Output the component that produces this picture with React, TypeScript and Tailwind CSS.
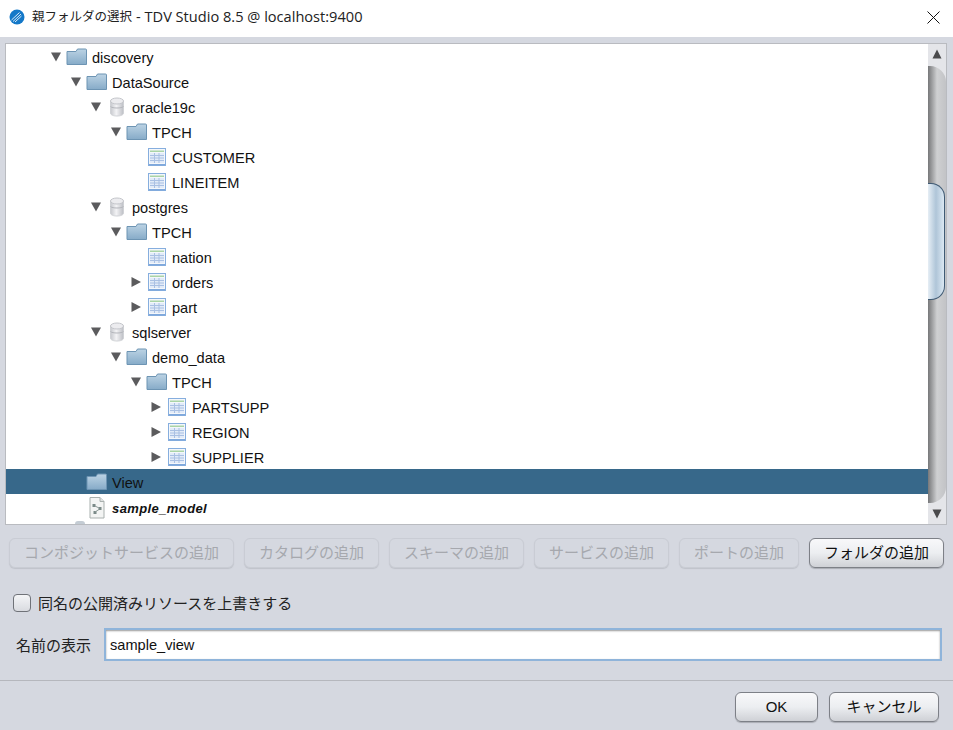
import React from "react";

const jp = "font-['Liberation_Sans','Noto_Sans_CJK_JP',sans-serif]";

function FolderIcon() {
  return (
    <svg width="22" height="18" viewBox="0 0 22 18" className="shrink-0">
      <defs>
        <linearGradient id="fg" x1="0" y1="0" x2="0" y2="1">
          <stop offset="0" stopColor="#bcd3e4" />
          <stop offset="1" stopColor="#86abc8" />
        </linearGradient>
      </defs>
      <path d="M1 3.5 H10 L11.5 1 H19.5 Q20.5 1 20.5 2 V16.5 H1 Z" fill="url(#fg)" stroke="#6d94b3" strokeWidth="1" />
    </svg>
  );
}

function DbIcon() {
  return (
    <svg width="16" height="20" viewBox="0 0 16 20" className="shrink-0">
      <defs>
        <linearGradient id="dg" x1="0" y1="0" x2="1" y2="0">
          <stop offset="0" stopColor="#c6c8cd" />
          <stop offset="0.45" stopColor="#f3f3f5" />
          <stop offset="1" stopColor="#bcbec4" />
        </linearGradient>
      </defs>
      <path d="M1.5 4 V16 C1.5 18 4.5 19 8 19 C11.5 19 14.5 18 14.5 16 V4 Z" fill="url(#dg)" stroke="#d0d2d6" />
      <ellipse cx="8" cy="4" rx="6.5" ry="3" fill="#ececef" stroke="#c4c6cb" />
      <path d="M1.5 9.5 C3 11.5 13 11.5 14.5 9.5" fill="none" stroke="#b4b6bc" />
    </svg>
  );
}

function TableIcon() {
  return (
    <svg width="18" height="18" viewBox="0 0 18 18" className="shrink-0">
      <rect x="0.5" y="0.5" width="17" height="17" fill="#f4f7fb" stroke="#86aede" />
      <rect x="2" y="2.5" width="14" height="1.5" fill="#a9d4a6" />
      <path d="M2 5 H16 V15 H2 Z" fill="#e2ebf8" />
      <path d="M2 7.5 H16 M2 10 H16 M2 12.5 H16 M6.5 5 V15 M11 5 V15" stroke="#a9c0e3" strokeWidth="1" fill="none" />
      <rect x="1" y="16" width="16" height="1.5" fill="#7fa8dc" />
    </svg>
  );
}

function ModelIcon() {
  return (
    <svg width="16" height="22" viewBox="0 0 16 22" className="shrink-0">
      <path d="M1 0.5 H11 L15 4.5 V21 H1 Z" fill="#f3f4f3" stroke="#a9b0ae" />
      <path d="M11 0.5 V4.5 H15" fill="#dfe2e2" stroke="#a9b0ae" />
      <rect x="3.5" y="7" width="3" height="3" fill="#7b8a88" />
      <rect x="9.5" y="10" width="3" height="3" fill="#7b8a88" />
      <rect x="4.5" y="14" width="3" height="3" fill="#7b8a88" />
      <path d="M6 9 L10 11 M6 15 L10 12.5" stroke="#8e9b99" fill="none" />
    </svg>
  );
}

type Arrow = "down" | "right" | "none";
type Kind = "folder" | "db" | "table";
type Row = { d: number; a: Arrow; k: Kind; t: string; sel?: boolean };

const rows: Row[] = [
  { d: 0, a: "down", k: "folder", t: "discovery" },
  { d: 1, a: "down", k: "folder", t: "DataSource" },
  { d: 2, a: "down", k: "db", t: "oracle19c" },
  { d: 3, a: "down", k: "folder", t: "TPCH" },
  { d: 4, a: "none", k: "table", t: "CUSTOMER" },
  { d: 4, a: "none", k: "table", t: "LINEITEM" },
  { d: 2, a: "down", k: "db", t: "postgres" },
  { d: 3, a: "down", k: "folder", t: "TPCH" },
  { d: 4, a: "none", k: "table", t: "nation" },
  { d: 4, a: "right", k: "table", t: "orders" },
  { d: 4, a: "right", k: "table", t: "part" },
  { d: 2, a: "down", k: "db", t: "sqlserver" },
  { d: 3, a: "down", k: "folder", t: "demo_data" },
  { d: 4, a: "down", k: "folder", t: "TPCH" },
  { d: 5, a: "right", k: "table", t: "PARTSUPP" },
  { d: 5, a: "right", k: "table", t: "REGION" },
  { d: 5, a: "right", k: "table", t: "SUPPLIER" },
  { d: 1, a: "none", k: "folder", t: "View", sel: true },
];

const pads: Record<number, string> = {
  0: "pl-[44px]",
  1: "pl-[64px]",
  2: "pl-[84px]",
  3: "pl-[104px]",
  4: "pl-[124px]",
  5: "pl-[144px]",
};

function ArrowMark({ a }: { a: Arrow }) {
  return (
    <span className="flex w-[16px] shrink-0 items-center">
      {a !== "none" && (
        <svg width="12" height="12" viewBox="0 0 12 12" className="shrink-0">
          {a === "down" ? <path d="M1 1.5 H11 L6 10.5 Z" fill="#5b5b5d" /> : <path d="M1.5 1 L11 6 L1.5 11 Z" fill="#5b5b5d" />}
        </svg>
      )}
    </span>
  );
}

function TreeRow({ r }: { r: Row }) {
  return (
    <div className={`flex h-[25px] items-center ${pads[r.d]} ${r.sel ? "bg-[#37688a]" : ""}`}>
      <ArrowMark a={r.a} />
      <span className="flex w-[22px] shrink-0 justify-center">
        {r.k === "folder" ? <FolderIcon /> : r.k === "db" ? <DbIcon /> : <TableIcon />}
      </span>
      <span className="ml-[4px] pt-[4px] text-[14.6px] leading-none text-[#111]">{r.t}</span>
    </div>
  );
}

function JButton({ w, label, disabled }: { w: string; label: string; disabled?: boolean }) {
  return (
    <button
      className={`${w} h-[30px] shrink-0 rounded-[6px] text-[15px] ${jp} ${
        disabled
          ? "border border-[#c9ccd4] bg-[#d5d8e0] text-[#a6a8ae] shadow-[0_1px_1px_#bfc2ca]"
          : "border border-[#7d8087] bg-gradient-to-b from-[#f8f8fa] via-[#eceef1] to-[#cfd1d6] text-[#111] shadow-[0_1px_1px_#a9acb3]"
      }`}
    >
      {label}
    </button>
  );
}

export default function App() {
  return (
    <div className={`flex h-[730px] w-[953px] flex-col overflow-hidden bg-[#d5d8e0] ${jp}`}>
      {/* title bar */}
      <div className="flex h-[37px] shrink-0 items-center bg-white pb-[3px] pl-[9px] pr-[13px]">
        <svg width="16" height="16" viewBox="0 0 16 16" className="shrink-0">
          <circle cx="8" cy="8" r="7.5" fill="#1478c8" />
          <path d="M2.5 11 L10.5 3.5 M4 12.5 L12 5 M6 13 L12.5 7" stroke="#dcecf8" strokeWidth="1" fill="none" />
        </svg>
        <span className="ml-[7px] font-['Open_Sans','Noto_Sans_CJK_JP',sans-serif] text-[12.5px] text-[#222]">親フォルダの選択</span>
        <span className="ml-[4px] font-['Open_Sans','Noto_Sans_CJK_JP',sans-serif] text-[14.6px] text-[#222]">- TDV Studio 8.5 @ localhost:9400</span>
        <svg width="13" height="13" viewBox="0 0 13 13" className="ml-auto">
          <path d="M0.5 0.5 L12.5 12.5 M12.5 0.5 L0.5 12.5" stroke="#111" strokeWidth="1" />
        </svg>
      </div>

      {/* tree */}
      <div className="ml-[5px] mt-[6px] flex h-[482px] w-[942px] shrink-0 border border-[#b9bbc0] bg-white">
        <div className="min-w-0 flex-1 overflow-hidden">
          {rows.map((r, i) => (
            <TreeRow key={i} r={r} />
          ))}
          <div className="flex h-[27px] items-center pl-[83px]">
            <ModelIcon />
            <span className="ml-[7px] pt-[2px] text-[13px] font-bold italic tracking-[0.4px] text-[#111]">sample_model</span>
          </div>
          <div className="ml-[69px] h-[3px] w-[10px] rounded-t-[3px] bg-[#c4ccd4]" />
        </div>
        <div className="flex w-[18px] shrink-0 flex-col bg-[#e4e5e9]">
          <div className="flex h-[22px] shrink-0 items-start justify-center pt-[5px]">
            <svg width="10" height="10" viewBox="0 0 10 10"><path d="M5 0.5 L9.5 9.5 H0.5 Z" fill="#4a4a4c" /></svg>
          </div>
          <div className="min-h-0 flex-1 rounded-tr-[16px] rounded-br-[16px] bg-gradient-to-r from-[#77787a] via-[#cfd0d2] to-[#c2c3c6] pt-[117px]">
            <div className="h-[117px] w-[17px] rounded-r-[14px] border-y border-r border-[#3f5a74] bg-gradient-to-r from-[#e6eef5] via-[#afc5d8] to-[#dbe8f3]" />
          </div>
          <div className="flex h-[21px] shrink-0 items-end justify-center pb-[5px]">
            <svg width="10" height="10" viewBox="0 0 10 10"><path d="M0.5 0.5 H9.5 L5 9.5 Z" fill="#4a4a4c" /></svg>
          </div>
        </div>
      </div>

      {/* add buttons */}
      <div className="ml-[9px] mt-[13px] flex shrink-0 gap-[10px]">
        <JButton w="w-[225px]" label="コンポジットサービスの追加" disabled />
        <JButton w="w-[135px]" label="カタログの追加" disabled />
        <JButton w="w-[135px]" label="スキーマの追加" disabled />
        <JButton w="w-[135px]" label="サービスの追加" disabled />
        <JButton w="w-[120px]" label="ポートの追加" disabled />
        <JButton w="w-[135px]" label="フォルダの追加" />
      </div>

      {/* checkbox */}
      <div className="ml-[13px] mt-[26px] flex h-[18px] shrink-0 items-center gap-[7px]">
        <span className="h-[18px] w-[18px] rounded-[4px] border border-[#6f7278] bg-gradient-to-b from-[#f4f5f7] to-[#d9dbe0]" />
        <span className="pt-[2px] text-[15px] text-[#222]">同名の公開済みリソースを上書きする</span>
      </div>

      {/* name */}
      <div className="ml-[16px] mt-[16px] flex h-[33px] shrink-0 items-center">
        <span className="w-[88px] pt-[3px] text-[15px] text-[#222]">名前の表示</span>
        <div className="flex h-[33px] w-[838px] items-center border-2 border-[#8fb4da] bg-white pl-[4px] pt-[2px] text-[14.6px] text-[#111] shadow-[inset_0_1px_2px_#999]">
          sample_view
        </div>
      </div>

      <div className="mt-[19px] h-px shrink-0 bg-[#b5b7bd]" />

      {/* footer */}
      <div className="mt-[11px] flex shrink-0 justify-end gap-[11px] pr-[14px]">
        <JButton w="w-[83px]" label="OK" />
        <JButton w="w-[110px]" label="キャンセル" />
      </div>
    </div>
  );
}
